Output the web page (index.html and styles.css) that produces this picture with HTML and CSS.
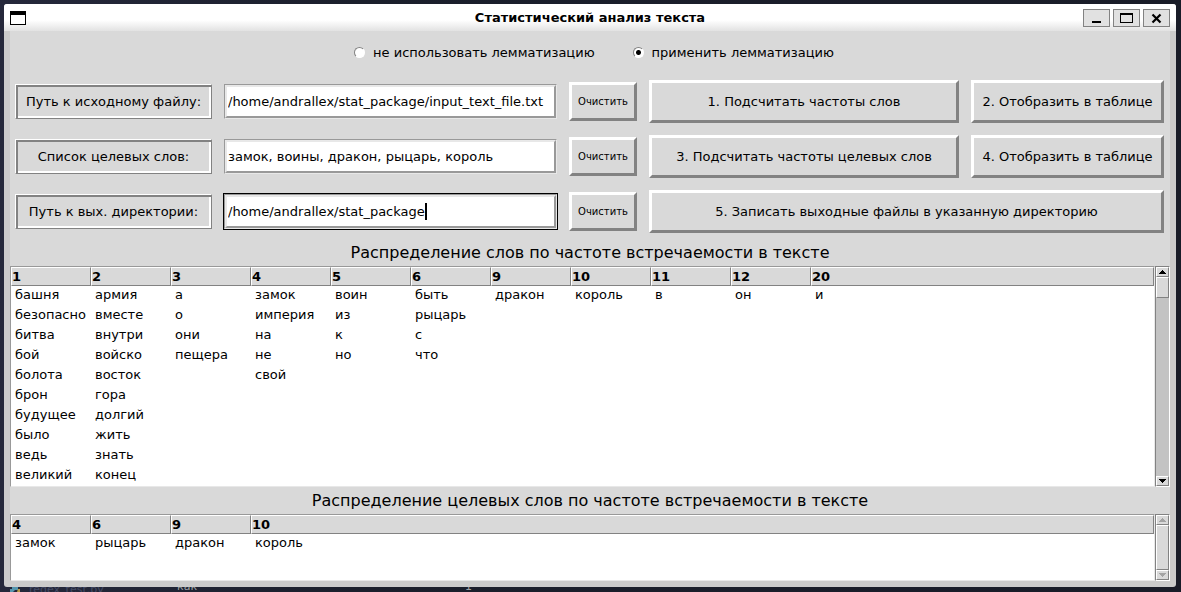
FILE: index.html
```html
<!DOCTYPE html>
<html lang="ru">
<head>
<meta charset="utf-8">
<title>Статистический анализ текста</title>
<link rel="stylesheet" href="styles.css">
</head>
<body>
<main class="window">
  <header class="titlebar">
    <svg class="app-icon" width="16" height="14" viewBox="0 0 16 14" shape-rendering="crispEdges"><path fill="#000" d="M0 0h16v14H0z"/><path fill="#fff" d="M1 4h14v9H1z"/></svg>
    <h1 class="title">Статистический анализ текста</h1>
    <div class="controls">
      <button class="control" aria-label="Свернуть"><svg width="25" height="16" viewBox="0 0 25 16" shape-rendering="crispEdges"><path d="M8 11h9v2H8z"/></svg></button>
      <button class="control" aria-label="Развернуть"><svg width="25" height="16" viewBox="0 0 25 16" shape-rendering="crispEdges"><path fill-rule="evenodd" d="M6 3h13v10H6zM7 5v7h11V5z"/></svg></button>
      <button class="control" aria-label="Закрыть"><svg width="25" height="16" viewBox="0 0 25 16"><path d="M8.500 4.500l8 8M16.500 4.500l-8 8" fill="none" stroke="#000" stroke-width="2.200"/></svg></button>
    </div>
  </header>

  <div class="content">
    <div class="modes">
      <label class="mode"><input class="radio" type="radio" name="lemma">не использовать лемматизацию</label>
      <label class="mode"><input class="radio" type="radio" name="lemma" checked>применить лемматизацию</label>
    </div>

    <form class="form">
      <label class="caption" for="source">Путь к исходному файлу:</label>
      <div class="field"><input class="entry" id="source" type="text" value="/home/andrallex/stat_package/input_text_file.txt"></div>
      <button class="button small" type="button">Очистить</button>
      <button class="button" type="button">1. Подсчитать частоты слов</button>
      <button class="button" type="button">2. Отобразить в таблице</button>

      <label class="caption" for="targets">Список целевых слов:</label>
      <div class="field"><input class="entry" id="targets" type="text" value="замок, воины, дракон, рыцарь, король"></div>
      <button class="button small" type="button">Очистить</button>
      <button class="button" type="button">3. Подсчитать частоты целевых слов</button>
      <button class="button" type="button">4. Отобразить в таблице</button>

      <label class="caption" for="output">Путь к вых. директории:</label>
      <div class="field active"><input class="entry" id="output" type="text" value="/home/andrallex/stat_package"><span class="caret"></span></div>
      <button class="button small" type="button">Очистить</button>
      <button class="button wide" type="button">5. Записать выходные файлы в указанную директорию</button>
    </form>

    <h2 class="heading">Распределение слов по частоте встречаемости в тексте</h2>
    <section class="panel main-panel">
      <div class="sheet">
        <table class="table">
          <thead><tr><th>1</th><th>2</th><th>3</th><th>4</th><th>5</th><th>6</th><th>9</th><th>10</th><th>11</th><th>12</th><th class="last">20</th></tr></thead>
          <tbody>
            <tr><td>башня</td><td>армия</td><td>а</td><td>замок</td><td>воин</td><td>быть</td><td>дракон</td><td>король</td><td>в</td><td>он</td><td>и</td></tr>
            <tr><td>безопасно</td><td>вместе</td><td>о</td><td>империя</td><td>из</td><td>рыцарь</td><td></td><td></td><td></td><td></td><td></td></tr>
            <tr><td>битва</td><td>внутри</td><td>они</td><td>на</td><td>к</td><td>с</td><td></td><td></td><td></td><td></td><td></td></tr>
            <tr><td>бой</td><td>войско</td><td>пещера</td><td>не</td><td>но</td><td>что</td><td></td><td></td><td></td><td></td><td></td></tr>
            <tr><td>болота</td><td>восток</td><td></td><td>свой</td><td></td><td></td><td></td><td></td><td></td><td></td><td></td></tr>
            <tr><td>брон</td><td>гора</td><td></td><td></td><td></td><td></td><td></td><td></td><td></td><td></td><td></td></tr>
            <tr><td>будущее</td><td>долгий</td><td></td><td></td><td></td><td></td><td></td><td></td><td></td><td></td><td></td></tr>
            <tr><td>было</td><td>жить</td><td></td><td></td><td></td><td></td><td></td><td></td><td></td><td></td><td></td></tr>
            <tr><td>ведь</td><td>знать</td><td></td><td></td><td></td><td></td><td></td><td></td><td></td><td></td><td></td></tr>
            <tr><td>великий</td><td>конец</td><td></td><td></td><td></td><td></td><td></td><td></td><td></td><td></td><td></td></tr>
          </tbody>
        </table>
      </div>
      <div class="scrollbar">
        <button class="arrow" aria-label="Вверх"><svg width="7" height="4" viewBox="0 0 7 4" shape-rendering="crispEdges"><path d="M3 0h1v1h1v1h1v1h1v1H0V3h1V2h1V1h1z"/></svg></button>
        <div class="thumb"></div>
        <button class="arrow down" aria-label="Вниз"><svg width="7" height="4" viewBox="0 0 7 4" shape-rendering="crispEdges"><path d="M0 0h7v1H6v1H5v1H4v1H3V3H2V2H1V1H0z"/></svg></button>
      </div>
    </section>

    <h2 class="heading">Распределение целевых слов по частоте встречаемости в тексте</h2>
    <section class="panel target-panel">
      <div class="sheet">
        <table class="table">
          <thead><tr><th>4</th><th>6</th><th>9</th><th class="last">10</th></tr></thead>
          <tbody><tr><td>замок</td><td>рыцарь</td><td>дракон</td><td>король</td></tr></tbody>
        </table>
      </div>
      <div class="scrollbar">
        <button class="arrow" aria-label="Вверх" disabled><svg width="7" height="4" viewBox="0 0 7 4" shape-rendering="crispEdges"><path d="M3 0h1v1h1v1h1v1h1v1H0V3h1V2h1V1h1z"/></svg></button>
        <div class="thumb full"></div>
        <button class="arrow down" aria-label="Вниз" disabled><svg width="7" height="4" viewBox="0 0 7 4" shape-rendering="crispEdges"><path d="M0 0h7v1H6v1H5v1H4v1H3V3H2V2H1V1H0z"/></svg></button>
      </div>
    </section>
  </div>
</main>
<footer class="behind">
  <svg class="snake" width="10" height="5" viewBox="0 0 10 5"><path fill="#5596ae" d="M2 0h6v3H5L3 5H0V2h2z"/><path fill="#b99b45" d="M8 2h2v3H7z"/></svg>
  <span class="file">regex_test.py</span>
  <span class="word">как</span>
  <span class="count">1</span>
</footer>
</body>
</html>
```

FILE: styles.css
```css
* { box-sizing: border-box; }

body {
  margin: 0;
  height: 100vh;
  padding: 4px 5px 0 4px;
  display: flex;
  flex-direction: column;
  overflow: hidden;
  background: linear-gradient(90deg, #25283b, #1b1f2c 30%, #191c28);
  color: #000;
  font: 13px/20px "DejaVu Sans", sans-serif;
}

button, input { font: inherit; color: inherit; margin: 0; }

.window {
  flex: 1;
  min-height: 0;
  display: flex;
  flex-direction: column;
  border-radius: 3px;
  overflow: hidden;
  background: #cbcbcb;
}

.titlebar {
  display: grid;
  grid-template-columns: 87px 1fr 87px;
  align-items: center;
  height: 27px;
  padding: 0 6px;
  background: linear-gradient(#fff 60%, #e2e2e2);
}
.title { margin: 0; font-size: 13px; line-height: 20px; text-align: center; }
.controls { display: flex; gap: 3px; }
.control {
  width: 27px;
  height: 18px;
  padding: 0;
  border: 1px solid #828282;
  background: #e1e1e1;
}
.control svg { display: block; }

.content {
  flex: 1;
  min-height: 0;
  display: flex;
  flex-direction: column;
  margin: 0 6px 6px;
  background: #d9d9d9;
}

.modes {
  display: flex;
  justify-content: center;
  align-items: center;
  gap: 38px;
  height: 43px;
  padding-left: 8px;
}
.mode { display: flex; align-items: center; gap: 8px; }
.radio {
  appearance: none;
  width: 11px;
  height: 11px;
  border: 1px solid;
  border-color: #828282 #fff #fff #828282;
  border-radius: 50%;
  background: #fff;
}
.radio:checked { background: radial-gradient(#000 2px, #fff 3px); }

.form {
  display: grid;
  grid-template-columns: 197px 1fr 68px 310px 193px;
  grid-auto-rows: 55px;
  column-gap: 12px;
  align-items: center;
  padding: 0 6px 0 5px;
}
.caption {
  height: 35px;
  line-height: 33px;
  text-align: center;
  white-space: nowrap;
  border: 1px solid;
  border-color: #fff #828282 #828282 #fff;
  box-shadow: inset 2px 2px #828282, inset -2px -2px #fff;
}
.field {
  position: relative;
  height: 35px;
  border: 1px solid;
  border-color: #999 #e8e8e8 #e8e8e8 #999;
}
.field.active { outline: 1px solid #000; }
.entry {
  display: block;
  width: 100%;
  height: 33px;
  padding: 0 1px;
  border: 2px solid;
  border-color: #e8e8e8 #999 #999 #e8e8e8;
  border-radius: 0;
  background: #fff;
  outline: 0;
}
.caret {
  position: absolute;
  left: 200px;
  top: 8px;
  width: 2px;
  height: 17px;
  background: #000;
}
.button {
  height: 43px;
  padding: 0;
  white-space: nowrap;
  border: 3px solid;
  border-color: #fff #828282 #828282 #fff;
  background: #d9d9d9;
}
.small { height: 39px; font-size: 10px; }
.wide { grid-column: span 2; }

.heading {
  margin: 0;
  font-size: 16px;
  font-weight: normal;
  line-height: 27px;
  text-align: center;
}

.panel { display: flex; min-height: 0; }
.main-panel { flex: 1; }
.target-panel { height: 67px; }
.sheet {
  flex: 1;
  overflow: hidden;
  border: 1px solid;
  border-color: #999 #e8e8e8 #e8e8e8 #999;
  background: #fff;
}
.table { width: 100%; table-layout: fixed; border-collapse: separate; border-spacing: 0; }
.table th {
  width: 80px;
  height: 19px;
  padding: 0;
  line-height: 17px;
  text-align: left;
  border: 1px solid;
  border-color: #fff #828282 #828282 #fff;
  background: #d9d9d9;
}
.table .last { width: auto; }
.table td { height: 20px; padding: 0 0 0 4px; line-height: 18px; vertical-align: top; white-space: nowrap; }

.scrollbar {
  display: flex;
  flex-direction: column;
  width: 15px;
  border: 1px solid;
  border-color: #828282 #fff #fff #828282;
  background: #c3c3c3;
}
.arrow, .thumb {
  border: 1px solid;
  border-color: #fff #828282 #828282 #fff;
  background: #d9d9d9;
}
.arrow { display: flex; align-items: center; justify-content: center; height: 10px; padding: 0; }
.arrow:disabled svg { fill: #a3a3a3; }
.thumb { height: 21px; }
.thumb.full { flex: 1; }
.down { margin-top: auto; }

.behind {
  display: grid;
  grid-template-columns: 19px 148px 288px 1fr;
  height: 5px;
  padding-left: 6px;
  overflow: hidden;
  font-size: 11px;
  line-height: 12px;
}
.file { color: #454b66; margin-top: -3px; }
.word { color: #9da0a3; margin-top: -6px; }
.count { color: #9da0a3; margin-top: -6px; }
```
